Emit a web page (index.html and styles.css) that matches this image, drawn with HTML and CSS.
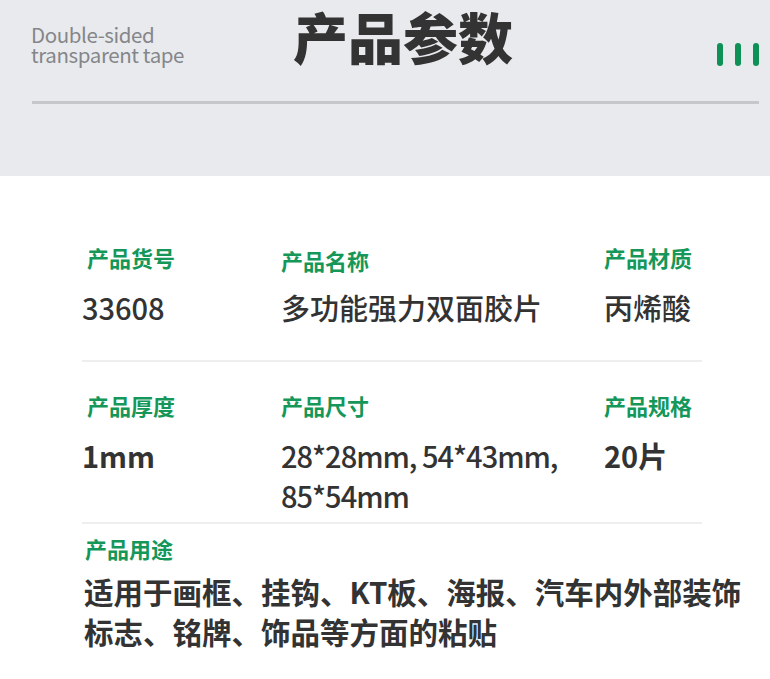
FILE: index.html
```html
<!DOCTYPE html>
<html lang="zh-CN">
<head>
  <meta charset="UTF-8" />
  <meta name="viewport" content="width=device-width, initial-scale=1.0"/>
  <title>产品参数</title>
  <link rel="stylesheet" href="styles.css">
</head>
<body>
  <div class="header">
    <div class="header-top">
      <div class="en">Double-sided<br>transparent tape</div>
      <h1 class="title">产品参数</h1>
      <div class="bars">
        <span></span><span></span><span></span>
      </div>
    </div>
    <div class="rule"></div>
  </div>

  <div class="params">
    <div class="row row-first">
      <div class="cell">
        <div class="label label-first">产品货号</div>
        <div class="value">33608</div>
      </div>
      <div class="cell">
        <div class="label label-low">产品名称</div>
        <div class="value">多功能强力双面胶片</div>
      </div>
      <div class="cell">
        <div class="label">产品材质</div>
        <div class="value">丙烯酸</div>
      </div>
    </div>

    <div class="row">
      <div class="cell">
        <div class="label label-first">产品厚度</div>
        <div class="value value-bold">1mm</div>
      </div>
      <div class="cell">
        <div class="label">产品尺寸</div>
        <div class="value value-tight">28*28mm, 54*43mm,<br>85*54mm</div>
      </div>
      <div class="cell">
        <div class="label">产品规格</div>
        <div class="value value-bold">20片</div>
      </div>
    </div>

    <div class="usage">
      <div class="label">产品用途</div>
      <p class="usage-text">适用于画框、挂钩、KT板、海报、汽车内外部装饰标志、铭牌、饰品等方面的粘贴</p>
    </div>
  </div>
</body>
</html>
```

FILE: styles.css
```css
body {
  margin: 0;
  font-family: "Noto Sans CJK SC", "Noto Sans", sans-serif;
  background-color: #fff;
  color: #333;
}

.header {
  background-color: #e9eaed;
  height: 176px;
  padding: 0 11px 0 31px;
  box-sizing: border-box;
}

.header-top {
  display: flex;
  align-items: flex-start;
  height: 101px;
}

.en {
  width: 262px;
  margin-top: 24px;
  font-size: 20.5px;
  line-height: 20px;
  letter-spacing: -0.4px;
  color: #84868a;
}

.title {
  margin: 0;
  font-size: 55px;
  font-weight: 900;
  line-height: 70px;
  color: #333;
}

.bars {
  margin-left: auto;
  margin-top: 43px;
  display: flex;
  gap: 12px;
}

.bars span {
  width: 6px;
  height: 23px;
  border-radius: 3px;
  background: #0e9157;
}

.rule {
  height: 3px;
  margin-left: 1px;
  background: #c5c7cb;
}

.params {
  padding: 0 68px 0 82px;
}

.row {
  display: grid;
  grid-template-columns: 199px 323px 1fr;
  padding: 30px 0 7px;
  border-bottom: 2px solid #eeeeee;
}

.row-first {
  padding-top: 68px;
  padding-bottom: 5px;
}

.label {
  font-size: 22px;
  line-height: 26px;
  font-weight: 700;
  color: #15975a;
}

.label-first {
  padding-left: 5px;
}

.label-low {
  margin-top: 3px;
  margin-bottom: -3px;
}

.value {
  margin-top: 17px;
  min-height: 68px;
  font-size: 29px;
  line-height: 40px;
  font-weight: 500;
}

.value-bold {
  font-weight: 700;
}

.value-tight {
  letter-spacing: -1px;
}

.usage {
  padding-top: 11px;
}

.usage .label {
  padding-left: 3px;
}

.usage-text {
  width: 670px;
  margin: 10px 0 0 2px;
  font-size: 29.5px;
  line-height: 40px;
  font-weight: 700;
}
```
